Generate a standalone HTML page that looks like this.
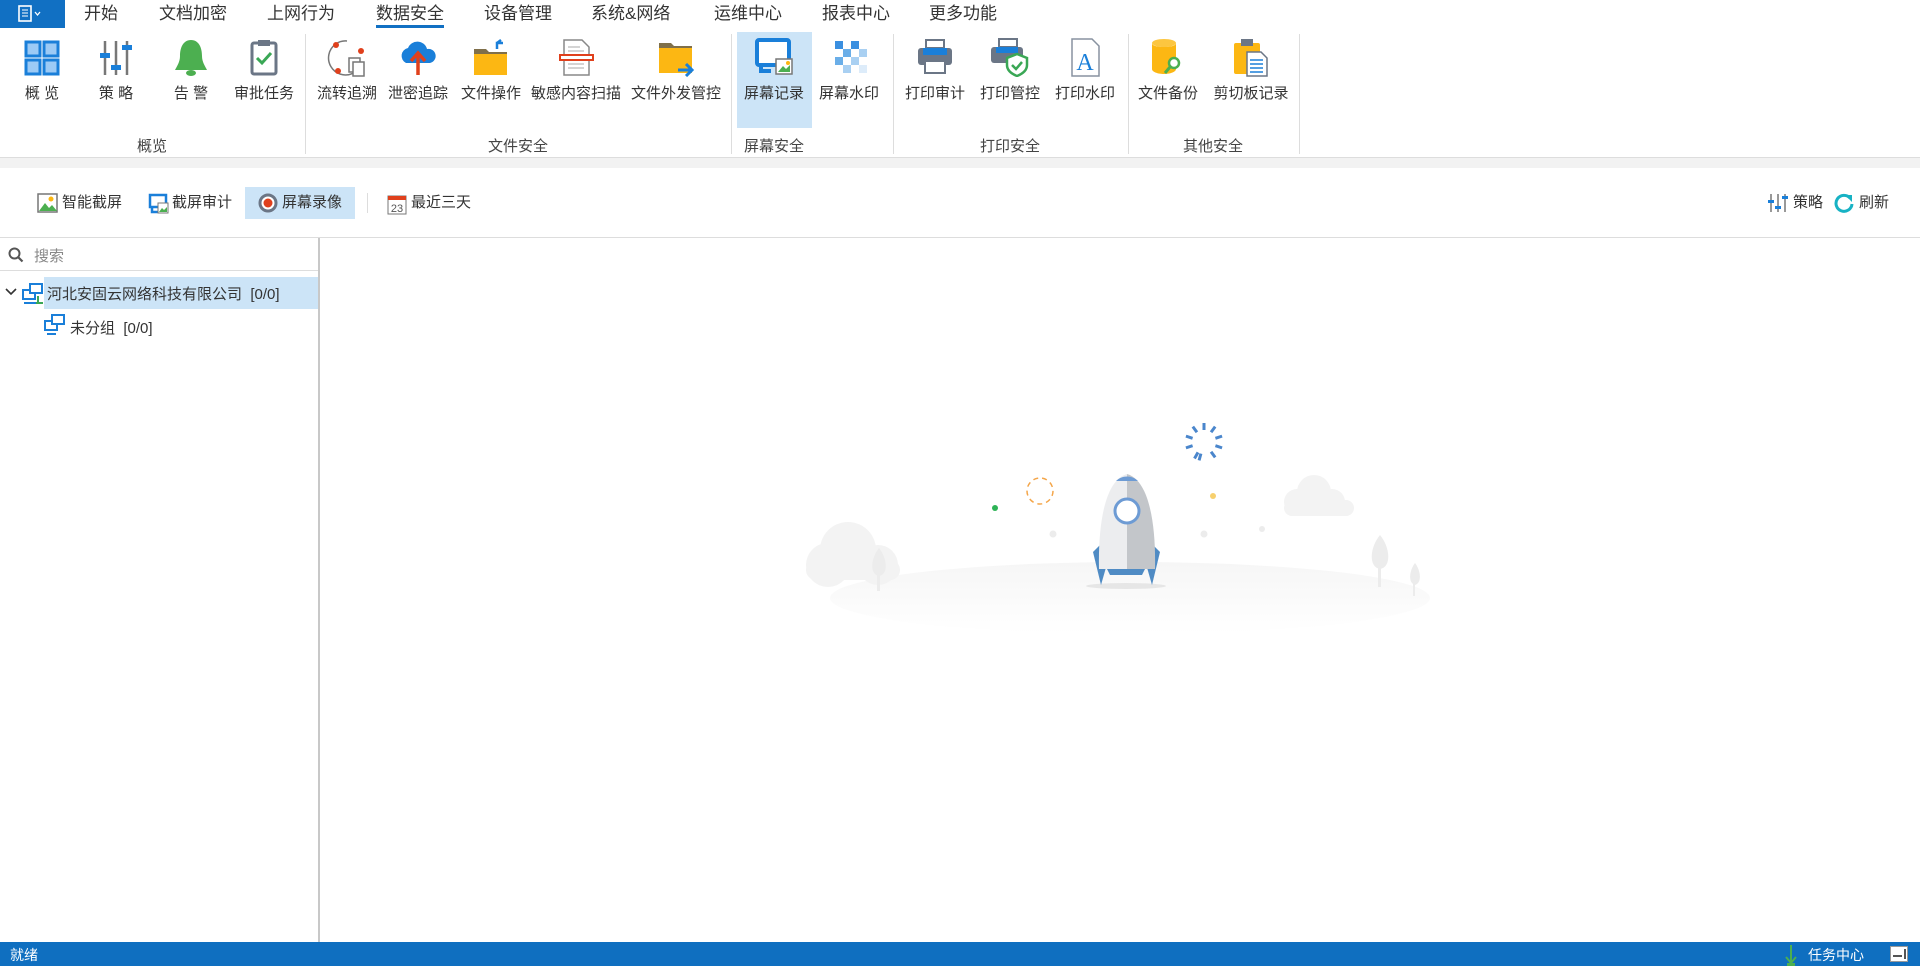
<!DOCTYPE html>
<html><head><meta charset="utf-8"><style>
*{margin:0;padding:0;box-sizing:border-box}
body{width:1920px;height:966px;overflow:hidden;background:#fff;font-family:"Liberation Sans","Noto Sans CJK SC",sans-serif;color:#333;position:relative}
.a{position:absolute}
.tab{position:absolute;top:2px;font-size:17px;color:#333;line-height:24px}
.btn{position:absolute;top:33px;height:94px;text-align:center;font-size:15px;color:#333}
.btn svg{display:block;margin:4px auto 0}
.btn span{position:absolute;left:-30px;right:-30px;top:49px;white-space:nowrap}
.gl{position:absolute;top:135px;font-size:15px;color:#444;transform:translateX(-50%);white-space:nowrap}
.sep{position:absolute;top:34px;height:120px;width:1px;background:#ddd}
.tb{position:absolute;top:193px;font-size:15px;color:#333;line-height:20px;white-space:nowrap}
</style></head><body>
<div class="a" style="left:0;top:0;width:65px;height:28px;background:#1170c3"></div>
<svg class="a" style="left:18px;top:5px" width="32" height="18"><rect x="1" y="1" width="12" height="15" fill="none" stroke="#fff" stroke-width="1.6"/><line x1="4" y1="5" x2="10" y2="5" stroke="#fff"/><line x1="4" y1="8" x2="10" y2="8" stroke="#fff"/><line x1="4" y1="11" x2="10" y2="11" stroke="#fff"/><path d="M17 7l2.5 3 2.5-3" fill="none" stroke="#fff" stroke-width="1.3"/></svg>
<div class="tab" style="left:84px">开始</div>
<div class="tab" style="left:159px">文档加密</div>
<div class="tab" style="left:267px">上网行为</div>
<div class="tab" style="left:376px">数据安全</div>
<div class="a" style="left:376px;top:25px;width:68px;height:3px;background:#1170c3"></div>
<div class="tab" style="left:484px">设备管理</div>
<div class="tab" style="left:591px">系统&amp;网络</div>
<div class="tab" style="left:714px">运维中心</div>
<div class="tab" style="left:822px">报表中心</div>
<div class="tab" style="left:929px">更多功能</div>

<div class="a" style="left:737px;top:32px;width:75px;height:96px;background:#cce4f7"></div>
<div class="sep" style="left:305px"></div><div class="sep" style="left:731px"></div><div class="sep" style="left:893px"></div><div class="sep" style="left:1128px"></div><div class="sep" style="left:1299px"></div>

<div class="btn" style="left:22px;width:40px"><svg width="38" height="40"><rect x="3" y="5" width="14" height="14" fill="#9ccaf5" stroke="#1a7fd9" stroke-width="3"/><rect x="21" y="5" width="14" height="14" fill="#9ccaf5" stroke="#1a7fd9" stroke-width="3"/><rect x="3" y="23" width="14" height="14" fill="#9ccaf5" stroke="#1a7fd9" stroke-width="3"/><rect x="21" y="23" width="14" height="14" fill="#9ccaf5" stroke="#1a7fd9" stroke-width="3"/></svg><span>概 览</span></div>
<div class="btn" style="left:96px;width:40px"><svg width="38" height="40"><g stroke="#777" stroke-width="2.5"><line x1="8" y1="4" x2="8" y2="38"/><line x1="19" y1="4" x2="19" y2="38"/><line x1="30" y1="4" x2="30" y2="38"/></g><rect x="3" y="16" width="10" height="5" fill="#1a7fd9"/><rect x="14" y="28" width="10" height="5" fill="#1a7fd9"/><rect x="25" y="8" width="10" height="5" fill="#1a7fd9"/></svg><span>策 略</span></div>
<div class="btn" style="left:171px;width:40px"><svg width="38" height="40"><path d="M19 3c-8 0-11 8-11 16 0 6-3 10-5 14h32c-2-4-5-8-5-14 0-8-3-16-11-16z" fill="#4caf50"/><ellipse cx="19" cy="36" rx="5" ry="3" fill="#4caf50"/></svg><span>告 警</span></div>
<div class="btn" style="left:244px;width:40px"><svg width="38" height="40"><rect x="7" y="6" width="24" height="31" rx="2" fill="#fff" stroke="#6b7686" stroke-width="3"/><rect x="13" y="3" width="12" height="6" fill="#6b7686"/><path d="M12 21l5 5 9-10" fill="none" stroke="#3aa755" stroke-width="3"/></svg><span>审批任务</span></div>

<div class="btn" style="left:327px;width:40px"><svg width="42" height="40"><path d="M20 4a17 17 0 1 0 14 24" fill="none" stroke="#777" stroke-width="1.5"/><circle cx="9" cy="8" r="3" fill="#e0401c"/><circle cx="34" cy="14" r="3" fill="#e0401c"/><circle cx="11" cy="34" r="3" fill="#e0401c"/><rect x="22" y="21" width="11" height="14" fill="#fff" stroke="#777" stroke-width="1.5"/><rect x="26" y="25" width="11" height="14" fill="#fff" stroke="#777" stroke-width="1.5"/></svg><span>流转追溯</span></div>
<div class="btn" style="left:398px;width:40px"><svg width="40" height="40"><path d="M8 26a8 8 0 0 1 2-15 10 10 0 0 1 19 1 7 7 0 0 1 3 14z" fill="#1a7fd9"/><path d="M20 38V17M13 24l7-8 7 8" fill="none" stroke="#e0401c" stroke-width="3.5"/></svg><span>泄密追踪</span></div>
<div class="btn" style="left:471px;width:40px"><svg width="40" height="40"><path d="M3 12h12l3 3h18v23H3z" fill="#7f6f4a"/><rect x="3" y="17" width="33" height="21" fill="#fcb713"/><path d="M26 12V6h6M26 6l4-3" fill="none" stroke="#1a7fd9" stroke-width="2.5"/></svg><span>文件操作</span></div>
<div class="btn" style="left:556px;width:40px"><svg width="40" height="40"><path d="M8 3h18l7 7v28H8z" fill="#fff" stroke="#888" stroke-width="1.5"/><g stroke="#aaa"><line x1="12" y1="10" x2="24" y2="10"/><line x1="12" y1="14" x2="28" y2="14"/><line x1="12" y1="27" x2="28" y2="27"/><line x1="12" y1="31" x2="28" y2="31"/></g><rect x="4" y="18" width="33" height="5" fill="#fff" stroke="#e0401c" stroke-width="2"/></svg><span>敏感内容扫描</span></div>
<div class="btn" style="left:656px;width:40px"><svg width="40" height="40"><path d="M3 6h12l3 3h18v27H3z" fill="#7f6f4a"/><rect x="3" y="11" width="33" height="25" fill="#fcb713"/><path d="M22 33h14M30 27l6 6-6 6" fill="none" stroke="#1a7fd9" stroke-width="3"/></svg><span>文件外发管控</span></div>

<div class="btn" style="left:754px;width:40px"><svg width="42" height="40"><rect x="3" y="3" width="32" height="25" rx="2" fill="#fff" stroke="#1a7fd9" stroke-width="4"/><path d="M7 28v6h10" fill="none" stroke="#1a7fd9" stroke-width="4"/><rect x="22" y="22" width="16" height="15" fill="#fff" stroke="#777" stroke-width="1.5"/><path d="M24 35l5-6 3 3 4-4v7z" fill="#4caf50"/><circle cx="34" cy="26" r="2" fill="#fcb713"/></svg><span>屏幕记录</span></div>
<div class="btn" style="left:829px;width:40px"><svg width="40" height="40"><g><rect x="6" y="4" width="8" height="8" fill="#3a8fe0"/><rect x="22" y="4" width="8" height="8" fill="#3a8fe0"/><rect x="14" y="12" width="8" height="8" fill="#6aaee8"/><rect x="30" y="12" width="8" height="8" fill="#a9d0f2"/><rect x="6" y="20" width="8" height="8" fill="#6aaee8"/><rect x="22" y="20" width="8" height="8" fill="#a9d0f2"/><rect x="14" y="28" width="8" height="8" fill="#a9d0f2"/><rect x="30" y="28" width="8" height="8" fill="#ddecfa"/></g></svg><span>屏幕水印</span></div>

<div class="btn" style="left:915px;width:40px"><svg width="40" height="40"><rect x="11" y="3" width="18" height="8" fill="#fff" stroke="#6b7686" stroke-width="2"/><rect x="3" y="11" width="34" height="17" rx="3" fill="#6b7686"/><rect x="8" y="11" width="24" height="7" fill="#1a7fd9"/><rect x="10" y="24" width="20" height="12" fill="#fff" stroke="#6b7686" stroke-width="2"/></svg><span>打印审计</span></div>
<div class="btn" style="left:990px;width:40px"><svg width="40" height="40"><rect x="9" y="2" width="18" height="8" fill="#fff" stroke="#6b7686" stroke-width="2"/><rect x="1" y="10" width="32" height="16" rx="3" fill="#6b7686"/><rect x="6" y="10" width="22" height="6" fill="#1a7fd9"/><path d="M27 17l10 4v7c0 6-5 9-10 11-5-2-10-5-10-11v-7z" fill="#fff" stroke="#3aa755" stroke-width="2.5"/><path d="M22 28l4 4 6-7" fill="none" stroke="#3aa755" stroke-width="2.5"/></svg><span>打印管控</span></div>
<div class="btn" style="left:1065px;width:40px"><svg width="40" height="40"><path d="M7 2h20l7 7v30H7z" fill="#fff" stroke="#8892a0" stroke-width="1.5"/><text x="20" y="33" text-anchor="middle" font-family="Liberation Serif,serif" font-size="24" fill="#1a7fd9">A</text></svg><span>打印水印</span></div>

<div class="btn" style="left:1148px;width:40px"><svg width="40" height="40"><ellipse cx="16" cy="6" rx="12" ry="4" fill="#fcc640"/><path d="M4 6v26c0 3 6 5 12 5s12-2 12-5V6c0 3-6 4-12 4S4 9 4 6z" fill="#fcb713"/><circle cx="26" cy="26" r="5" fill="#fff" stroke="#4caf50" stroke-width="2.5"/><line x1="22" y1="30" x2="17" y2="36" stroke="#4caf50" stroke-width="3"/></svg><span>文件备份</span></div>
<div class="btn" style="left:1231px;width:40px"><svg width="40" height="40"><rect x="3" y="6" width="26" height="31" rx="2" fill="#fcb713"/><rect x="10" y="2" width="12" height="7" fill="#6b7686"/><path d="M16 15h14l6 6v18H16z" fill="#fff" stroke="#6b7686" stroke-width="1.5"/><g stroke="#1a7fd9" stroke-width="1.5"><line x1="19" y1="23" x2="32" y2="23"/><line x1="19" y1="27" x2="32" y2="27"/><line x1="19" y1="31" x2="32" y2="31"/><line x1="19" y1="35" x2="32" y2="35"/></g></svg><span>剪切板记录</span></div>

<div class="gl" style="left:152px">概览</div>
<div class="gl" style="left:518px">文件安全</div>
<div class="gl" style="left:774px">屏幕安全</div>
<div class="gl" style="left:1010px">打印安全</div>
<div class="gl" style="left:1213px">其他安全</div>

<div class="a" style="left:0;top:157px;width:1920px;height:11px;background:#f2f2f2;border-top:1px solid #ddd"></div>

<div class="a" style="left:245px;top:187px;width:110px;height:32px;background:#cce4f7"></div>
<svg class="a" style="left:37px;top:193px" width="21" height="20"><rect x="1" y="1" width="19" height="18" fill="#fff" stroke="#777" stroke-width="1.5"/><path d="M2 18l6-8 4 5 3-3 5 6z" fill="#4caf50"/><circle cx="14" cy="6" r="2.5" fill="#fcb713"/></svg>
<div class="tb" style="left:62px">智能截屏</div>
<svg class="a" style="left:147px;top:193px" width="22" height="22"><path d="M14 14H3V2h16v8" fill="none" stroke="#1a7fd9" stroke-width="2.5"/><path d="M5 14v5h6" fill="none" stroke="#1a7fd9" stroke-width="2.5"/><rect x="11" y="10" width="10" height="10" fill="#fff" stroke="#777"/><path d="M12 19l3-4 2 2 3-3v5z" fill="#4caf50"/></svg>
<div class="tb" style="left:172px">截屏审计</div>
<svg class="a" style="left:258px;top:193px" width="20" height="20"><circle cx="10" cy="10" r="8" fill="#fff" stroke="#6b7686" stroke-width="3"/><circle cx="10" cy="10" r="4.5" fill="#e0401c"/></svg>
<div class="tb" style="left:282px">屏幕录像</div>
<div class="a" style="left:367px;top:193px;width:1px;height:20px;background:#ddd"></div>
<svg class="a" style="left:387px;top:193px" width="20" height="22"><rect x="1" y="3" width="18" height="18" fill="#fff" stroke="#777"/><rect x="1" y="3" width="18" height="4" fill="#e0401c"/><text x="10" y="19" text-anchor="middle" font-size="11" fill="#555" font-family="Liberation Sans">23</text></svg>
<div class="tb" style="left:411px">最近三天</div>
<svg class="a" style="left:1768px;top:193px" width="20" height="20"><g stroke="#777" stroke-width="1.5"><line x1="3" y1="1" x2="3" y2="19"/><line x1="10" y1="1" x2="10" y2="19"/><line x1="17" y1="1" x2="17" y2="19"/></g><rect x="0" y="7" width="6" height="3" fill="#1a7fd9"/><rect x="7" y="13" width="6" height="3" fill="#1a7fd9"/><rect x="14" y="3" width="6" height="3" fill="#1a7fd9"/></svg>
<div class="tb" style="left:1793px">策略</div>
<svg class="a" style="left:1834px;top:193px" width="20" height="20"><path d="M16 5a8 8 0 1 0 2 6" fill="none" stroke="#17b2c4" stroke-width="3"/><path d="M11 2h7v7z" fill="#17b2c4"/></svg>
<div class="tb" style="left:1859px">刷新</div>
<div class="a" style="left:0;top:237px;width:1920px;height:1px;background:#ddd"></div>

<div class="a" style="left:318px;top:238px;width:2px;height:704px;background:#c8c8c8"></div>
<svg class="a" style="left:8px;top:247px" width="16" height="16"><circle cx="6.5" cy="6.5" r="5" fill="none" stroke="#555" stroke-width="2"/><line x1="10" y1="10" x2="14.5" y2="14.5" stroke="#555" stroke-width="2.2"/></svg>
<div class="a" style="left:34px;top:245px;font-size:15px;color:#888">搜索</div>
<div class="a" style="left:0;top:270px;width:318px;height:1px;background:#ddd"></div>
<div class="a" style="left:44px;top:277px;width:274px;height:32px;background:#cce4f7"></div>
<svg class="a" style="left:5px;top:287px" width="12" height="10"><path d="M1 2l5 5 5-5" fill="none" stroke="#333" stroke-width="1.6"/></svg>
<svg class="a" style="left:22px;top:283px" width="22" height="22"><rect x="1" y="7" width="12" height="9" fill="#fff" stroke="#1a7fd9" stroke-width="2"/><rect x="8" y="1" width="12" height="9" fill="#fff" stroke="#1a7fd9" stroke-width="2"/><line x1="2" y1="20" x2="14" y2="20" stroke="#1a7fd9" stroke-width="2"/><line x1="16" y1="13" x2="16" y2="20" stroke="#3aa755" stroke-width="2"/><line x1="14" y1="20" x2="21" y2="20" stroke="#3aa755" stroke-width="2"/></svg>
<div class="a" style="left:47px;top:283px;font-size:15px;color:#333;white-space:nowrap">河北安固云网络科技有限公司&nbsp;&nbsp;[0/0]</div>
<svg class="a" style="left:44px;top:314px" width="22" height="22"><rect x="1" y="7" width="12" height="9" fill="#fff" stroke="#1a7fd9" stroke-width="2"/><rect x="8" y="1" width="12" height="9" fill="#fff" stroke="#1a7fd9" stroke-width="2"/><line x1="3" y1="20" x2="12" y2="20" stroke="#1a7fd9" stroke-width="2"/></svg>
<div class="a" style="left:70px;top:317px;font-size:15px;color:#333;white-space:nowrap">未分组&nbsp;&nbsp;[0/0]</div>

<svg class="a" style="left:0;top:0" width="1920" height="966">
<defs><linearGradient id="g" x1="0" y1="0" x2="0" y2="1"><stop offset="0" stop-color="#f6f6f6"/><stop offset="1" stop-color="#fff"/></linearGradient></defs>
<ellipse cx="1130" cy="598" rx="300" ry="36" fill="url(#g)"/>
<g fill="#f3f3f3"><circle cx="848" cy="550" r="28"/><circle cx="828" cy="565" r="22"/><circle cx="878" cy="565" r="20"/><rect x="806" y="560" width="94" height="20" rx="10"/>
<circle cx="1314" cy="492" r="17"/><circle cx="1297" cy="502" r="13"/><circle cx="1332" cy="502" r="13"/><rect x="1284" y="500" width="70" height="16" rx="8"/></g>
<g fill="#ececec"><path d="M879 548c-8 10-10 26 0 28 10-2 8-18 0-28z"/><rect x="877" y="575" width="3" height="16"/>
<path d="M1380 535c-10 12-12 32 0 34 12-2 10-22 0-34z"/><rect x="1378" y="568" width="3" height="19"/>
<path d="M1415 563c-6 8-7 20 0 22 7-2 6-14 0-22z"/><rect x="1413" y="584" width="2" height="12"/></g>
<ellipse cx="1126" cy="586" rx="40" ry="3" fill="#e6e6e6"/>
<path d="M1103 542l-10 10 8 33 8-28z" fill="#4f8bc4"/><path d="M1150 542l10 10-8 33-8-28z" fill="#4f8bc4"/>
<path d="M1107 569h38l-3 6h-32z" fill="#4f8bc4"/>
<path d="M1127 474c-22 6-29 50-28 95h28z" fill="#ecedef"/><path d="M1127 474c22 6 29 50 28 95h-28z" fill="#c3c6ca"/>
<path d="M1116 481c6-6 16-6 22 0z" fill="#6d9bd4"/>
<circle cx="1127" cy="511" r="12" fill="#fff" stroke="#6d9bd4" stroke-width="3"/>
<circle cx="1040" cy="491" r="13" fill="none" stroke="#f4a64a" stroke-width="1.5" stroke-dasharray="5 4"/>
<circle cx="995" cy="508" r="3" fill="#2eb356"/><circle cx="1213" cy="496" r="3" fill="#f7d06e"/>
<g fill="#ececec"><circle cx="1053" cy="534" r="3.5"/><circle cx="1204" cy="534" r="3.5"/><circle cx="1262" cy="529" r="3"/></g>
<g stroke="#4a86cc" stroke-width="3" transform="translate(1204,442)">
<line x1="0" y1="-19" x2="0" y2="-12"/><line x1="0" y1="19" x2="0" y2="12" transform="rotate(15)"/>
<line x1="0" y1="-19" x2="0" y2="-12" transform="rotate(36)"/><line x1="0" y1="-19" x2="0" y2="-12" transform="rotate(72)"/>
<line x1="0" y1="-19" x2="0" y2="-12" transform="rotate(108)"/><line x1="0" y1="-19" x2="0" y2="-12" transform="rotate(144)"/>
<line x1="0" y1="-19" x2="0" y2="-12" transform="rotate(-150)"/><line x1="0" y1="-19" x2="0" y2="-12" transform="rotate(-108)"/>
<line x1="0" y1="-19" x2="0" y2="-12" transform="rotate(-72)"/><line x1="0" y1="-19" x2="0" y2="-12" transform="rotate(-36)"/></g>
</svg>

<div class="a" style="left:0;top:942px;width:1920px;height:24px;background:#0f6fc0"></div>
<div class="a" style="left:10px;top:945px;font-size:14px;color:#fff">就绪</div>
<svg class="a" style="left:1783px;top:944px" width="16" height="22"><line x1="8" y1="1" x2="8" y2="18" stroke="#4caf50" stroke-width="2"/><path d="M3 13l5 6 5-6" fill="none" stroke="#4caf50" stroke-width="2"/><rect x="4" y="19" width="8" height="3" fill="#4caf50"/></svg>
<div class="a" style="left:1808px;top:945px;font-size:14px;color:#fff">任务中心</div>
<svg class="a" style="left:1890px;top:946px" width="18" height="16"><rect x="0.5" y="0.5" width="17" height="15" fill="#fff" stroke="#999"/><rect x="3" y="9" width="9" height="2" fill="#555"/><rect x="14" y="3" width="2" height="10" fill="#555"/></svg>
</body></html>
